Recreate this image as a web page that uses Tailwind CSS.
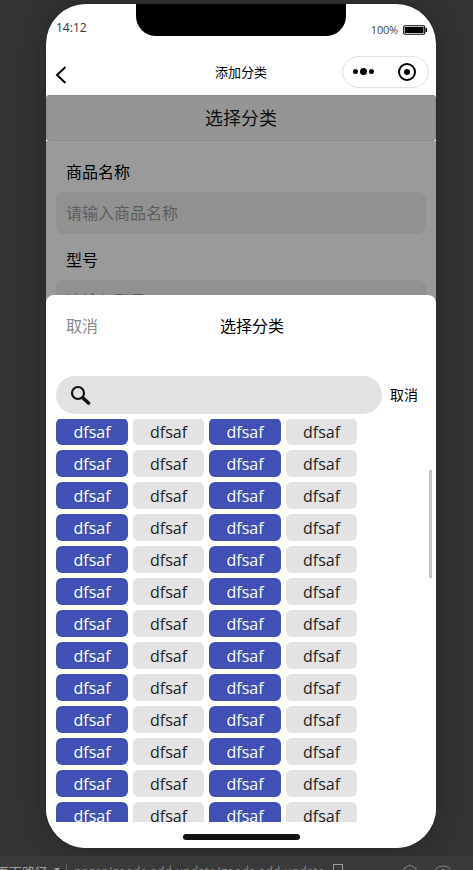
<!DOCTYPE html>
<html lang="en">
<head>
    <meta charset="UTF-8">
    <meta name="viewport" content="width=device-width, initial-scale=1.0">
    <title>添加分类</title>
    <script src="https://cdn.jsdelivr.net/npm/@tailwindcss/browser@4"></script>
</head>
<body class="w-[473px] h-[870px] overflow-hidden bg-[#333333] font-['Open_Sans','Noto_Sans_CJK_SC',sans-serif]">

    <!-- Phone -->
    <div class="relative mx-[46px] mt-1 w-[390px] h-[844px] rounded-[40px] overflow-hidden bg-white shadow-[0_0_24px_rgba(0,0,0,0.25)]">
        <!-- Notch -->
        <div class="absolute top-0 left-[90px] w-[210px] h-8 rounded-b-[20px] bg-black"></div>

        <!-- Status bar -->
        <div class="h-11 pl-[10px] pr-[9px] flex justify-between">
            <span class="mt-4 text-xs leading-4 text-[#333]">14:12</span>
            <div class="mt-[18px] h-4 flex items-center gap-[5px]">
                <span class="text-[11px] tracking-[-0.2px] text-[#444]">100%</span>
                <svg width="24" height="10" viewBox="0 0 24 10">
                    <rect x="0.75" y="0.75" width="21" height="8.5" rx="1.5" fill="none" stroke="#000" stroke-width="1.2"/>
                    <rect x="2" y="2" width="18.5" height="6" fill="#000"/>
                    <rect x="22.5" y="3" width="1.5" height="4" fill="#000"/>
                </svg>
            </div>
        </div>

        <!-- Nav bar -->
        <div class="relative h-[47px] flex items-center justify-between pl-[9px] pr-[7px]">
            <svg width="12" height="20" viewBox="0 0 12 20" class="mt-[7px]">
                <path d="M10.5 2 L2 10 L10.5 18" fill="none" stroke="#000" stroke-width="2"/>
            </svg>
            <span class="absolute left-0 right-0 text-center text-[13px] text-black mt-[3px]">添加分类</span>
            <div class="relative w-[87px] h-8 rounded-full border border-[#e2e2e2] flex items-center justify-between pl-[10px] pr-[12px]">
                <div class="flex items-center gap-[2px]">
                    <span class="w-[5px] h-[5px] rounded-full bg-black"></span>
                    <span class="w-[7px] h-[7px] rounded-full bg-black"></span>
                    <span class="w-[5px] h-[5px] rounded-full bg-black"></span>
                </div>
                <div class="w-[18px] h-[18px] rounded-full border-2 border-black flex items-center justify-center">
                    <span class="w-[6px] h-[6px] rounded-full bg-black"></span>
                </div>
            </div>
        </div>

        <!-- Page behind the sheet -->
        <div class="h-[46px] border border-[#8a8a8a] rounded-[3px] flex items-center justify-center text-lg text-[#111] bg-[#959595]">选择分类</div>
        <div class="px-[10px] h-[200px] bg-[#9a9a9a]">
            <div class="pl-[10px] pt-[20px] h-[51px] text-base leading-[22px] text-black">商品名称</div>
            <div class="h-[42px] pl-[10px] rounded-lg bg-[#919191] flex items-center text-base text-[#5e5e5e]">请输入商品名称</div>
            <div class="pl-[10px] pt-[15px] h-[46px] text-base leading-[22px] text-black">型号</div>
            <div class="h-[42px] pl-[10px] rounded-lg bg-[#919191] flex items-center text-base text-[#5e5e5e]">请输入型号</div>
        </div>

        <!-- Bottom sheet -->
        <div class="absolute left-0 right-0 top-[291px] bottom-0 rounded-t-lg bg-white">
            <div class="relative h-[81px] pl-5 pt-[20px] text-base leading-[22px]">
                <span class="text-[#888]">取消</span>
                <span class="absolute left-0 right-0 top-[20px] pl-[22px] text-center text-black">选择分类</span>
            </div>
            <div class="h-[38px] pl-[10px] flex items-center">
                <div class="w-[326px] h-[38px] pl-[14px] rounded-full bg-[#e2e2e2] flex items-center">
                    <svg width="21" height="21" viewBox="0 0 21 21">
                        <circle cx="8" cy="8" r="6" fill="none" stroke="#111" stroke-width="2.2"/>
                        <path d="M13.5 13.5 L18.5 18" stroke="#111" stroke-width="3.6" stroke-linecap="round"/>
                    </svg>
                </div>
                <span class="ml-2 text-sm text-black">取消</span>
            </div>

            <!-- Grid of options, the first row is scrolled a little -->
            <div class="relative mt-[5px] h-[403px] overflow-hidden">
                <div id="rows" class="pl-[10px] mt-[-1px] flex flex-col gap-[5px]"></div>
                <div class="absolute right-[4px] top-[51px] w-[3px] h-[108px] bg-[#c4c4c4]"></div>
            </div>

            <!-- Home indicator -->
            <div class="mt-[12px] mx-auto w-[117px] h-[6px] rounded-full bg-[#111]"></div>
        </div>
    </div>

    <!-- Devtools path bar -->
    <div class="relative mt-[8px] h-[14px] bg-[#3a3a3a] overflow-hidden whitespace-nowrap text-[#a0a0a0]">
        <div class="flex items-start ml-[-4px] mt-[7px]">
            <span class="text-[13px] leading-[18px]">页面路径</span>
            <span class="ml-[6px] mt-[5px] w-0 h-0 border-x-[3px] border-x-transparent border-t-[3px] border-t-[#a0a0a0]"></span>
            <span class="ml-[6px] mt-[1px] w-px h-3 bg-[#666]"></span>
            <span class="ml-[7px] text-xs leading-[18px] tracking-[0.08px] text-[#8a8a8a]">pages/goods-add-update/goods-add-update</span>
            <span class="ml-[8px] mt-[1px] w-[10px] h-3 border border-[#999]"></span>
        </div>
        <svg class="absolute left-[401px] top-[8px]" width="18" height="18" viewBox="0 0 18 18" fill="none" stroke="#8a8a8a">
            <path d="M9 1 L15 4.5 V12 L9 16 L3 12 V4.5 Z"/>
            <circle cx="9" cy="9" r="3"/>
        </svg>
        <svg class="absolute left-[434px] top-[9px]" width="18" height="14" viewBox="0 0 18 14" fill="none" stroke="#8a8a8a">
            <ellipse cx="9" cy="7" rx="8" ry="6"/>
            <circle cx="9" cy="7" r="2.5"/>
        </svg>
    </div>

    <script>
        // 13 rows of the same four options
        const rows = document.getElementById("rows");
        for (let i = 0; i < 13; i++) {
            rows.innerHTML += `
                <div class="flex gap-[5px] text-base">
                    <div class="w-[72px] h-[27px] rounded-md bg-[#4050b5] text-white flex items-center justify-center">dfsaf</div>
                    <div class="w-[71px] h-[27px] rounded-md bg-[#e3e3e3] text-[#222] flex items-center justify-center">dfsaf</div>
                    <div class="w-[72px] h-[27px] rounded-md bg-[#4050b5] text-white flex items-center justify-center">dfsaf</div>
                    <div class="w-[71px] h-[27px] rounded-md bg-[#e3e3e3] text-[#222] flex items-center justify-center">dfsaf</div>
                </div>`;
        }
    </script>

</body>
</html>
